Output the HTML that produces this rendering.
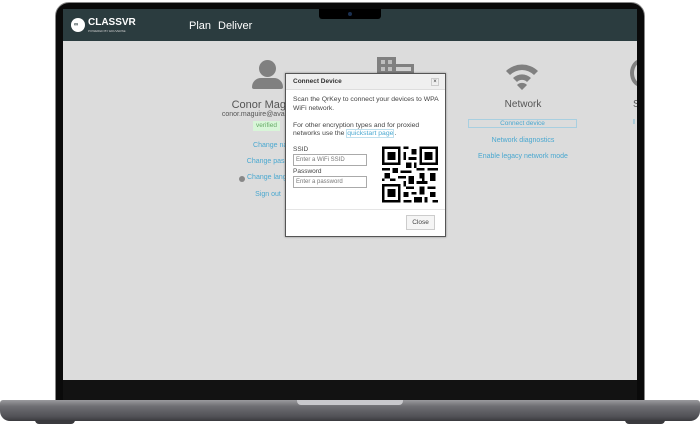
<!DOCTYPE html>
<html><head><meta charset="utf-8"><style>
*{margin:0;padding:0;box-sizing:border-box}
body{width:700px;height:427px;background:#fff;position:relative;overflow:hidden;font-family:"Liberation Sans",sans-serif}
.a{position:absolute}
.lid{left:55px;top:2px;width:590px;height:400px;background:#0a0a0a;border-radius:14px 14px 0 0;border:1px solid #888}
.screen{left:63px;top:9px;width:574px;height:371px;background:#dcdcdc;overflow:hidden}
.hdr{left:0;top:0;width:574px;height:32px;background:#2b3c3f}
.t{position:absolute;white-space:nowrap;transform:translateX(-50%)}
.lk{color:#4aa8d0;font-size:7px}
</style></head><body>
<div class="a lid"></div>
<div class="a" style="left:63px;top:380px;width:574px;height:20px;background:#121212"></div>
<div class="a screen">
 <div class="a hdr">
  <div class="a" style="left:8px;top:9px;width:14px;height:14px;border-radius:50%;background:#fff"></div>
  <div class="a" style="left:11px;top:13px;font-size:6px;color:#2b3c3f;font-weight:bold">∞</div>
  <div class="a" style="left:25px;top:8px;color:#fff;font-size:10px;font-weight:bold">CLASSVR</div>
  <div class="a" style="left:25px;top:20px;color:#ccc;font-size:3px">POWERED BY EDUVERSE</div>
  <div class="a" style="left:126px;top:11px;color:#fff;font-size:11px">Plan</div>
  <div class="a" style="left:155px;top:11px;color:#fff;font-size:11px">Deliver</div>
  <div class="a" style="left:256px;top:0;width:62px;height:10px;background:#000;border-radius:0 0 3px 3px"></div>
  <div class="a" style="left:285px;top:3px;width:4px;height:4px;border-radius:50%;background:#1a3050"></div>
 </div>
 <div class="a" style="left:196px;top:51px;width:17px;height:17px;border-radius:50%;background:#808080"></div>
 <div class="a" style="left:189px;top:69px;width:31px;height:11px;border-radius:9px 9px 2px 2px;background:#808080"></div>
 <div class="t" style="left:205px;top:90px;font-size:11px;color:#555">Conor Maguire</div>
 <div class="t" style="left:205px;top:102px;font-size:7px;color:#555">conor.maguire@avantis.co.uk</div>
 <div class="a" style="left:190px;top:112px;width:27px;height:10px;background:#d8f5d8;font-size:6.5px;color:#6a6;text-align:center;line-height:10px">verified</div>
 <div class="t lk" style="left:212px;top:133px">Change name</div>
 <div class="t lk" style="left:212px;top:149px">Change password</div>
 <div class="a" style="left:176px;top:167px;width:6px;height:6px;border-radius:50%;background:#888"></div>
 <div class="a lk" style="left:184px;top:165px">Change language</div>
 <div class="t lk" style="left:205px;top:182px">Sign out</div>
 <div class="a" style="left:314px;top:48px;width:19px;height:17px;background:#808080"></div>
 <div class="a" style="left:318px;top:51px;width:4px;height:4px;background:#bdbdbd"></div>
 <div class="a" style="left:325px;top:51px;width:4px;height:4px;background:#bdbdbd"></div>
 <div class="a" style="left:318px;top:58px;width:4px;height:4px;background:#bdbdbd"></div>
 <div class="a" style="left:325px;top:58px;width:4px;height:4px;background:#bdbdbd"></div>
 <div class="a" style="left:333px;top:55px;width:18px;height:10px;border:3px solid #808080;border-left:none;background:#d0d0d0"></div>
 <svg class="a" style="left:441px;top:51px" width="36" height="32" viewBox="0 0 36 32"><path d="M2 11A23 23 0 0 1 34 11L30 15A17 17 0 0 0 6 15Z M9 18A13 13 0 0 1 27 18L23 22A7 7 0 0 0 13 22Z M13 25L18 30L23 25A7 7 0 0 0 13 25Z" fill="#808080"/></svg>
 <div class="t" style="left:460px;top:90px;font-size:10px;color:#555">Network</div>
 <div class="a" style="left:405px;top:110px;width:109px;height:9px;border:1px solid #a8cfe0;font-size:6.5px;color:#4aa8d0;text-align:center;line-height:7px">Connect device</div>
 <div class="t lk" style="left:460px;top:128px">Network diagnostics</div>
 <div class="t lk" style="left:460px;top:144px">Enable legacy network mode</div>
 <div class="a" style="left:567px;top:50px;width:22px;height:28px;border-radius:50%;border:4px solid #808080"></div>
 <div class="a" style="left:570px;top:90px;font-size:10px;color:#555">S</div>
 <div class="a" style="left:570px;top:110px;font-size:7px;color:#4aa8d0">I</div>
 <div class="a" style="left:222px;top:64px;width:161px;height:164px;background:#fff;border:1px solid #555;box-shadow:0 0 2px rgba(0,0,0,.4)">
  <div class="a" style="left:0;top:0;width:159px;height:16px;background:#efefef;border-bottom:1px solid #ddd"></div>
  <div class="a" style="left:7px;top:4px;font-size:6.5px;font-weight:bold;color:#333">Connect Device</div>
  <div class="a" style="left:145px;top:4px;width:8px;height:8px;border:1px solid #ccc;font-size:6px;line-height:6px;text-align:center;color:#333">×</div>
  <div class="a" style="left:7px;top:22px;font-size:6.8px;color:#444;line-height:8.6px;white-space:nowrap">Scan the QrKey to connect your devices to WPA<br>WiFi network.<br><br>For other encryption types and for proxied<br>networks use the <span style="color:#4aa8d0;border:1px solid #bfe0ee">quickstart page</span>.</div>
  <div class="a" style="left:7px;top:72px;font-size:6.5px;color:#444">SSID</div>
  <div class="a" style="left:7px;top:80px;width:74px;height:12px;border:1px solid #aaa;font-size:6px;color:#777;padding-left:2px;line-height:10px">Enter a WiFi SSID</div>
  <div class="a" style="left:7px;top:94px;font-size:6.5px;color:#444">Password</div>
  <div class="a" style="left:7px;top:102px;width:74px;height:12px;border:1px solid #aaa;font-size:6px;color:#777;padding-left:2px;line-height:10px">Enter a password</div>
  <svg class="a" style="left:96px;top:72px" width="56" height="57" viewBox="0 0 21 21" shape-rendering="crispEdges">
   <g fill="#000"><path d="M0 0h7v7h-7zM14 0h7v7h-7zM0 14h7v7h-7z"/></g>
   <g fill="#fff"><path d="M1 1h5v5h-5zM15 1h5v5h-5zM1 15h5v5h-5z"/></g>
   <g fill="#000"><path d="M2 2h3v3h-3zM16 2h3v3h-3zM2 16h3v3h-3z"/>
   <path d="M8 0h2v1h-2zM11 1h2v2h-2zM8 2h1v3h-1zM10 4h3v1h-3zM9 6h2v2h-2zM12 6h1v2h-1zM0 8h3v1h-3zM4 8h2v2h-2zM7 9h4v1h-4zM13 8h3v1h-3zM17 8h4v1h-4zM1 10h2v2h-2zM6 11h3v1h-3zM10 11h2v3h-2zM14 10h2v2h-2zM18 10h2v3h-2zM0 12h1v1h-1zM3 12h2v1h-2zM8 13h1v2h-1zM13 13h4v1h-4zM9 15h3v1h-3zM14 15h2v3h-2zM17 15h3v1h-3zM8 17h2v2h-2zM11 17h2v1h-2zM18 17h2v2h-2zM12 19h3v2h-3zM8 20h3v1h-3zM16 19h1v2h-1zM19 20h2v1h-2zM15 12h1v1h-1z"/></g>
  </svg>
  <div class="a" style="left:0;top:135px;width:159px;height:1px;background:#e5e5e5"></div>
  <div class="a" style="left:120px;top:141px;width:29px;height:15px;border:1px solid #ccc;background:#f5f5f5;font-size:6.5px;color:#444;text-align:center;line-height:13px">Close</div>
 </div>
</div>
<div class="a" style="left:0;top:400px;width:700px;height:21px;border-radius:3px 3px 10px 10px;background:linear-gradient(#9a9a9e,#6e6e73 30%,#505055 80%,#3a3a3e)"></div>
<div class="a" style="left:297px;top:400px;width:106px;height:5px;border-radius:0 0 4px 4px;background:#c8c8cc"></div>
<div class="a" style="left:35px;top:420px;width:40px;height:4px;border-radius:0 0 4px 4px;background:#3a3a3e"></div>
<div class="a" style="left:625px;top:420px;width:40px;height:4px;border-radius:0 0 4px 4px;background:#3a3a3e"></div>
</body></html>
